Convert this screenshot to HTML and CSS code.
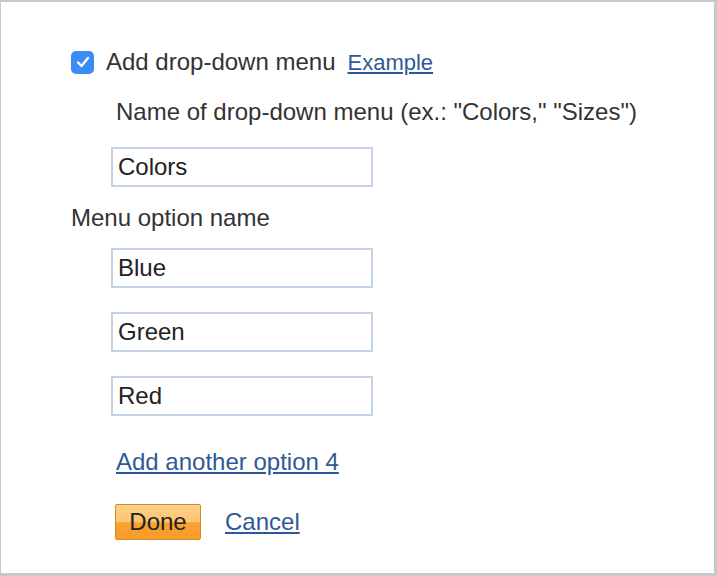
FILE: index.html
```html
<!DOCTYPE html>
<html lang="en">
<head>
  <meta charset="UTF-8">
  <title>Drop-down menu options</title>
  <link rel="stylesheet" href="styles.css">
</head>
<body>

  <div class="frame">
    <div class="check-row">
      <span class="checkbox">
        <svg width="14" height="12" viewBox="0 0 14 12">
          <path d="M2 6.5 L5.5 10 L12 2" fill="none" stroke="#fff" stroke-width="2.4" stroke-linecap="round" stroke-linejoin="round"/>
        </svg>
      </span>
      <span class="check-label">Add drop-down menu</span>
      <a href="#" class="example">Example</a>
    </div>

    <div class="menu-name">
      <p class="hint">Name of drop-down menu (ex.: "Colors," "Sizes")</p>
      <input type="text" class="field" value="Colors">
    </div>

    <p class="options-title">Menu option name</p>

    <!-- opcoes do menu -->
    <div class="options">
      <input type="text" class="field" value="Blue">
      <input type="text" class="field" value="Green">
      <input type="text" class="field" value="Red">
      <a href="#" class="add-option">Add another option 4</a>
    </div>

    <div class="actions">
      <button class="done">Done</button>
      <a href="#" class="cancel">Cancel</a>
    </div>
  </div>

</body>
</html>
```

FILE: styles.css
```css
body {
  margin: 0;
  font-family: 'Liberation Sans', Arial, sans-serif;
  color: #333;
}

.frame {
  box-sizing: border-box;
  width: 717px;
  height: 576px;
  background: #fff;
  border: solid #c8c8c8;
  border-width: 2px 3px 3px 1px;
  padding: 46px 0 0 70px;
}

a {
  color: #2f5996;
  text-decoration: underline;
}

.check-row {
  display: flex;
  align-items: center;
  height: 28px;
  font-size: 24px;
}

.checkbox {
  width: 23px;
  height: 23px;
  border-radius: 5px;
  background: #3a8df5;
  display: flex;
  align-items: center;
  justify-content: center;
}

.check-label {
  margin-left: 12px;
}

.example {
  margin-left: 12px;
  font-size: 22px;
  position: relative;
  top: 1px;
}

.menu-name {
  padding-left: 40px;
}

.hint {
  margin: 22px 0 0 5px;
  font-size: 24px;
  line-height: 28px;
}

.field {
  display: block;
  box-sizing: border-box;
  width: 262px;
  height: 40px;
  margin: 21px 0 0;
  padding: 0 5px;
  border: 2px solid #c3d3e5;
  border-radius: 0;
  font-family: 'Liberation Sans', Arial, sans-serif;
  font-size: 24px;
  color: #222;
  outline: none;
}

.options-title {
  margin: 17px 0 0;
  font-size: 24px;
  line-height: 28px;
}

.options {
  padding-left: 40px;
}

.options .field {
  margin-top: 24px;
}

.options .field:first-child {
  margin-top: 16px;
}

.add-option {
  display: inline-block;
  margin: 32px 0 0 5px;
  font-size: 24px;
  line-height: 28px;
}

.actions {
  display: flex;
  align-items: center;
  margin: 28px 0 0 44px;
}

.done {
  box-sizing: border-box;
  width: 86px;
  height: 36px;
  padding: 0;
  font-family: 'Liberation Sans', Arial, sans-serif;
  font-size: 24px;
  color: #222;
  border: 1px solid #cf8b2c;
  border-radius: 2px;
  background: linear-gradient(#ffd08a 0%, #fdc370 50%, #f9a231 52%, #f79b27 100%);
  cursor: pointer;
}

.cancel {
  margin-left: 24px;
  font-size: 24px;
}
```
